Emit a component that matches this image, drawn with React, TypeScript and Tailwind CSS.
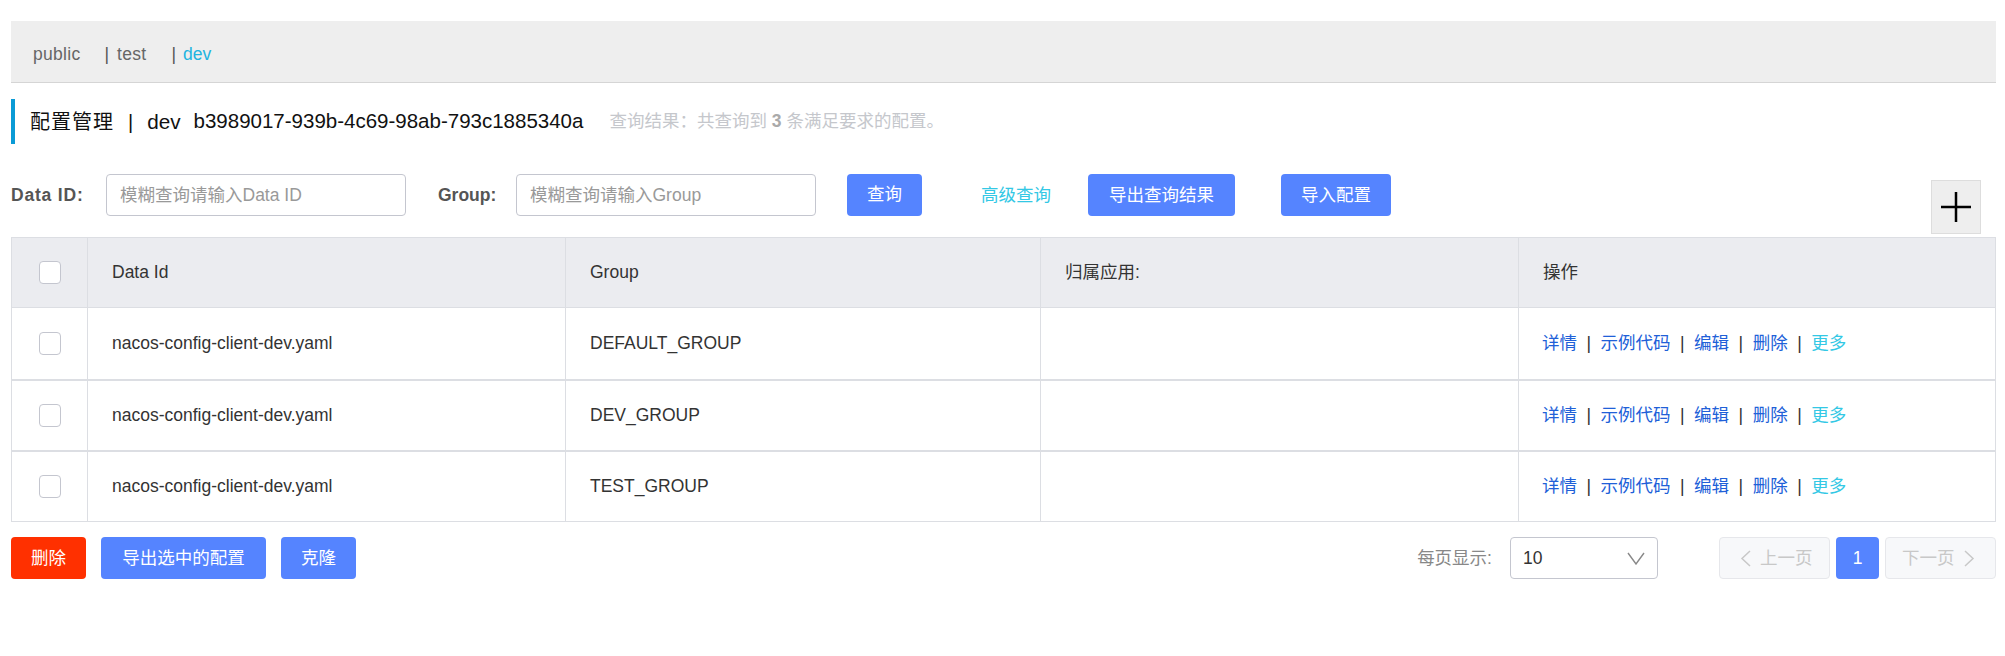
import React from "react";

const rows = [
  { dataId: "nacos-config-client-dev.yaml", group: "DEFAULT_GROUP" },
  { dataId: "nacos-config-client-dev.yaml", group: "DEV_GROUP" },
  { dataId: "nacos-config-client-dev.yaml", group: "TEST_GROUP" },
];

const actions = ["详情", "示例代码", "编辑", "删除"];

function Checkbox() {
  return (
    <span className="block w-[22px] h-[23px] rounded-[4px] border border-[#c4c6cf] bg-white" />
  );
}

function PrimaryButton({ children }: { children: React.ReactNode }) {
  return (
    <button className="h-[42px] px-5 rounded-[4px] bg-[#5584ff] text-white text-[17.5px] leading-none">
      {children}
    </button>
  );
}

export default function App() {
  return (
    <div className="min-h-[656px] bg-white pl-[11px] pr-[9px] pt-[21px] text-[17.5px] text-[#333] font-['Liberation_Sans','Noto_Sans_CJK_SC',sans-serif]">
      {/* namespace bar */}
      <div className="h-[62px] bg-[#eee] border-b border-[#d5d5d5] flex items-center pl-[22px] pt-[5px] text-[#666]">
        <span className="tracking-[0.3px]">public</span>
        <span className="ml-[24px] mr-[8px] text-[#555]">|</span>
        <span className="tracking-[0.3px]">test</span>
        <span className="ml-[25px] mr-[7px] text-[#555]">|</span>
        <span className="text-[#22b4e0]">dev</span>
      </div>

      {/* title */}
      <div className="mt-[16px] h-[45px] border-l-4 border-[#0a9bd6] pl-[15px] flex items-center text-[20px] text-[#111]">
        <span className="tracking-[1px]">配置管理</span>
        <span className="ml-[14px] mr-[14px]">|</span>
        <span className="text-[20.7px]">dev</span>
        <span className="ml-[13px] text-[20.5px]">b3989017-939b-4c69-98ab-793c1885340a</span>
        <span className="ml-[26px] text-[17.5px] text-[#c5c7cc]">
          查询结果：共查询到 <strong className="text-[#aaa]">3</strong> 条满足要求的配置。
        </span>
      </div>

      {/* search row */}
      <div className="mt-[30px] h-[60px] flex items-start">
        <label className="w-[95px] h-[42px] flex items-center font-bold text-[#555] tracking-[0.8px]">Data ID:</label>
        <div className="w-[300px] h-[42px] rounded-[4px] border border-[#c4c6cf] flex items-center pl-[13px] text-[#999]">
          模糊查询请输入Data ID
        </div>
        <label className="ml-[32px] w-[78px] h-[42px] flex items-center font-bold text-[#555]">Group:</label>
        <div className="w-[300px] h-[42px] rounded-[4px] border border-[#c4c6cf] flex items-center pl-[13px] text-[#999]">
          模糊查询请输入Group
        </div>
        <div className="ml-[31px]">
          <PrimaryButton>查询</PrimaryButton>
        </div>
        <span className="ml-[59px] h-[42px] flex items-center text-[#33c8e5]">高级查询</span>
        <div className="ml-[37px]">
          <button className="h-[42px] w-[147px] rounded-[4px] bg-[#5584ff] text-white">导出查询结果</button>
        </div>
        <div className="ml-[46px]">
          <button className="h-[42px] w-[110px] rounded-[4px] bg-[#5584ff] text-white">导入配置</button>
        </div>
        <button className="ml-auto mr-[15px] mt-[6px] w-[50px] h-[54px] bg-[#eee] border border-[#ddd] flex items-center justify-center">
          <svg width="30" height="30" viewBox="0 0 30 30">
            <path d="M15 0V30M0 15H30" stroke="#000" strokeWidth="2.5" />
          </svg>
        </button>
      </div>

      {/* table */}
      <div className="mt-[3px] border border-[#dcdee3]">
        <div className="grid grid-cols-[75px_478px_475px_478px_1fr] h-[70px] bg-[#ebecf0] border-b border-[#dcdee3]">
          <div className="flex items-center justify-center">
            <Checkbox />
          </div>
          <div className="border-l border-[#dcdee3] flex items-center pl-[24px]">Data Id</div>
          <div className="border-l border-[#dcdee3] flex items-center pl-[24px]">Group</div>
          <div className="border-l border-[#dcdee3] flex items-center pl-[24px]">归属应用:</div>
          <div className="border-l border-[#dcdee3] flex items-center pl-[24px]">操作</div>
        </div>
        {rows.map((r, i) => (
          <div
            key={i}
            className={`grid grid-cols-[75px_478px_475px_478px_1fr] h-[71px] ${
              i > 0 ? "border-t-2 border-[#dcdee3]" : ""
            }`}
          >
            <div className="flex items-center justify-center">
              <Checkbox />
            </div>
            <div className="border-l border-[#dcdee3] flex items-center pl-[24px]">{r.dataId}</div>
            <div className="border-l border-[#dcdee3] flex items-center pl-[24px]">{r.group}</div>
            <div className="border-l border-[#dcdee3]" />
            <div className="border-l border-[#dcdee3] flex items-center pl-[23px]">
              {actions.map((a) => (
                <React.Fragment key={a}>
                  <a className="text-[#2060d8]">{a}</a>
                  <span className="mx-[9.5px] text-[#333]">|</span>
                </React.Fragment>
              ))}
              <a className="text-[#33c8e5]">更多</a>
            </div>
          </div>
        ))}
      </div>

      {/* footer */}
      <div className="mt-[15px] flex items-center">
        <button className="h-[42px] w-[75px] rounded-[4px] bg-[#ff3000] text-white">删除</button>
        <button className="ml-[15px] h-[42px] w-[165px] rounded-[4px] bg-[#5584ff] text-white">导出选中的配置</button>
        <button className="ml-[15px] h-[42px] w-[75px] rounded-[4px] bg-[#5584ff] text-white">克隆</button>

        <span className="ml-auto text-[#888]">每页显示:</span>
        <div className="ml-[18px] w-[148px] h-[42px] rounded-[4px] border border-[#c4c6cf] flex items-center pl-[12px] pr-[12px] justify-between">
          <span className="text-[#333]">10</span>
          <svg width="18" height="13" viewBox="0 0 18 13">
            <polyline points="1,1 9,12 17,1" fill="none" stroke="#888" strokeWidth="1.4" />
          </svg>
        </div>

        <div className="ml-[61px] flex items-center gap-[6px]">
          <button className="w-[111px] h-[42px] rounded-[4px] bg-[#f7f8fa] border border-[#e6e7eb] flex items-center pl-[20px] text-[#c8c8c8]">
            <svg width="11" height="17" viewBox="0 0 11 17">
              <polyline points="10,1 2,8.5 10,16" fill="none" stroke="#c8c8c8" strokeWidth="1.5" />
            </svg>
            <span className="ml-[9px]">上一页</span>
          </button>
          <button className="w-[43px] h-[42px] rounded-[4px] bg-[#5584ff] text-white">1</button>
          <button className="w-[111px] h-[42px] rounded-[4px] bg-[#f7f8fa] border border-[#e6e7eb] flex items-center pl-[16px] text-[#c8c8c8]">
            <span>下一页</span>
            <svg className="ml-[9px]" width="11" height="17" viewBox="0 0 11 17">
              <polyline points="1,1 9,8.5 1,16" fill="none" stroke="#c8c8c8" strokeWidth="1.5" />
            </svg>
          </button>
        </div>
      </div>
    </div>
  );
}
